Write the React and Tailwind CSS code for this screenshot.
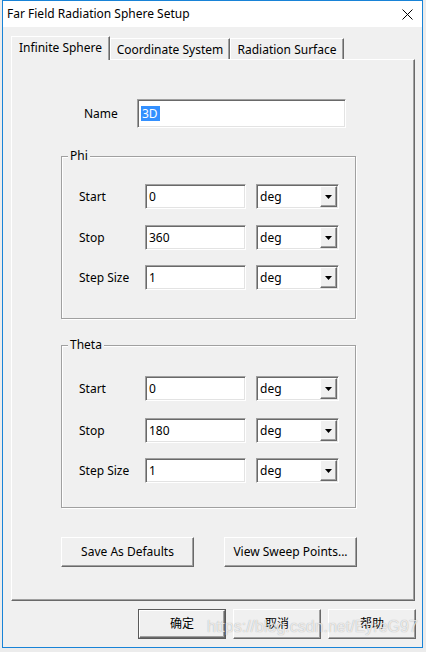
const font = "font-['Noto_Sans','Noto_Sans_CJK_SC',sans-serif]"
const raised = "border border-t-white border-l-white border-r-[#696969] border-b-[#696969] shadow-[inset_-1px_-1px_0_#a0a0a0]"
const sunken = "border border-t-[#a0a0a0] border-l-[#a0a0a0] border-r-white border-b-white shadow-[inset_1px_1px_0_#696969,inset_-1px_-1px_0_#e3e3e3]"

const TextBox = ({ value }) => (
  <div className={`${sunken} bg-white h-[25px] w-[101px] flex items-center pl-[3px] text-black`}>{value}</div>
)

const Combo = () => (
  <div className={`${sunken} bg-white h-[25px] w-[83px] ml-[10px] flex items-center pl-[3px] pr-[1px] py-[1px]`}>
    <span className="flex-1 text-black">deg</span>
    <div className={`${raised} bg-[#f0f0f0] h-full w-[17px] flex items-center justify-center`}>
      <svg width="7" height="4" viewBox="0 0 7 4">
        <path d="M0 0 H7 L3.5 4 Z" fill="#000" />
      </svg>
    </div>
  </div>
)

const Row = ({ label, value, className = "" }) => (
  <div className={`flex items-center h-[25px] ${className}`}>
    <span className="w-[66px]">{label}</span>
    <TextBox value={value} />
    <Combo />
  </div>
)

const Group = ({ title, rows, className = "" }) => (
  <div className={`relative ml-[49px] w-[295px] h-[163px] border border-[#a0a0a0] shadow-[inset_1px_1px_0_#fff,1px_1px_0_#fff] flex flex-col pl-[17px] ${className}`}>
    <span className="absolute left-[6px] top-[-9px] px-[2px] bg-[#f0f0f0] leading-[16px]">{title}</span>
    {rows}
  </div>
)

const Button = ({ children, className = "" }) => (
  <div className={`${raised} bg-[#f0f0f0] flex items-center justify-center ${className}`}>{children}</div>
)

export default function App() {
  return (
    <div className={`w-[426px] h-[652px] bg-[#ececec] ${font} text-[12px] text-black`}>
      <div className="relative ml-[2px] w-[421px] h-[648px] border border-[#1883d7] bg-[#f0f0f0] flex flex-col">
        {/* title bar */}
        <div className="h-[26px] bg-white flex items-center pl-[4px] pr-[9px]">
          <span className="flex-1">Far Field Radiation Sphere Setup</span>
          <svg width="11" height="11" viewBox="0 0 11 11">
            <path d="M0.5 0.5 L10.5 10.5 M10.5 0.5 L0.5 10.5" stroke="#000" strokeWidth="1" />
          </svg>
        </div>

        {/* tabs */}
        <div className="mt-[9px] ml-[8px] h-[23px] flex items-end">
          <div className="relative z-10 -mb-px h-[24px] w-[99px] bg-[#f0f0f0] border-t border-l border-r border-t-white border-l-white border-r-[#696969] shadow-[inset_-1px_0_0_#a0a0a0] flex items-start justify-center pt-[2px]">
            Infinite Sphere
          </div>
          <div className="h-[21px] w-[120px] border-t border-l border-r border-t-white border-l-white border-r-[#696969] shadow-[inset_-1px_0_0_#a0a0a0] flex items-center justify-center pt-[1px]">
            Coordinate System
          </div>
          <div className="h-[21px] w-[114px] border-t border-l border-r border-t-white border-l-white border-r-[#696969] shadow-[inset_-1px_0_0_#a0a0a0] flex items-center justify-center pt-[1px]">
            Radiation Surface
          </div>
        </div>

        {/* tab panel */}
        <div className={`ml-[8px] w-[404px] h-[542px] ${raised} flex flex-col`}>
          <div className="mt-[39px] ml-[72px] flex items-center">
            <span className="w-[53px]">Name</span>
            <div className={`${sunken} bg-white h-[29px] w-[209px] flex items-center pl-[3px]`}>
              <span className="bg-[#3390ff] text-white h-[15px] leading-[15px] pl-[1px] pr-[2px]">3D</span>
            </div>
          </div>

          <Group
            title="Phi"
            className="mt-[28px] pt-[27px]"
            rows={
              <>
                <Row label="Start" value="0" />
                <Row label="Stop" value="360" className="mt-[16px]" />
                <Row label="Step Size" value="1" className="mt-[15px]" />
              </>
            }
          />

          <Group
            title="Theta"
            className="mt-[26px] pt-[30px]"
            rows={
              <>
                <Row label="Start" value="0" />
                <Row label="Stop" value="180" className="mt-[17px]" />
                <Row label="Step Size" value="1" className="mt-[15px]" />
              </>
            }
          />

          <div className="mt-[29px] ml-[49px] flex gap-[30px]">
            <Button className="w-[133px] h-[30px]">Save As Defaults</Button>
            <Button className="w-[133px] h-[30px]">View Sweep Points...</Button>
          </div>
        </div>

        {/* dialog buttons */}
        <div className="mt-[8px] pr-[6px] flex justify-end gap-[7px]">
          <div className="border border-[#5a5a5a]">
            <Button className="w-[86px] h-[28px]">确定</Button>
          </div>
          <Button className="w-[88px] h-[30px]">取消</Button>
          <Button className="w-[88px] h-[30px]">帮助</Button>
        </div>

        <span className="absolute left-[204px] top-[617px] font-['Liberation_Sans',sans-serif] text-[16px] leading-[18px] text-white/75 [text-shadow:0_0_1px_rgba(0,0,0,0.35)] pointer-events-none">
          https://blog.csdn.net/EyreG97
        </span>
      </div>
    </div>
  )
}
